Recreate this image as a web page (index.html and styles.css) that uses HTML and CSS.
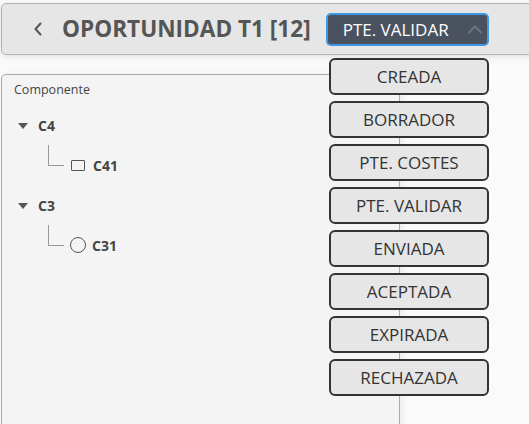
FILE: index.html
```html
<!DOCTYPE html>
<html lang="es">
<head>
<meta charset="utf-8">
<title>Oportunidad T1</title>
<link rel="stylesheet" href="styles.css">
</head>
<body>
  <header class="topbar">
    <button class="back" aria-label="Volver">
      <svg width="10" height="14" viewBox="0 0 10 14"><path d="M7.5 1.5 L2.5 7 L7.5 12.5" fill="none" stroke="#555" stroke-width="2" stroke-linecap="round" stroke-linejoin="round"/></svg>
    </button>
    <h1 class="title">OPORTUNIDAD T1 [12]</h1>
    <div class="status">
      <span class="status-text">PTE. VALIDAR</span>
      <svg class="caret" width="16" height="10" viewBox="0 0 16 10"><path d="M2 8.5 L8 2.5 L14 8.5" fill="none" stroke="#6e7582" stroke-width="2" stroke-linecap="round" stroke-linejoin="round"/></svg>
    </div>
  </header>

  <main class="content">
    <section class="panel">
      <div class="panel-label">Componente</div>
      <ul class="tree">
        <li class="node">
          <div class="node-row"><span class="toggle"></span><span class="node-label">C4</span></div>
          <ul class="children">
            <li class="leaf"><span class="connector"></span><span class="icon-square"></span><span class="leaf-label">C41</span></li>
          </ul>
        </li>
        <li class="node">
          <div class="node-row"><span class="toggle"></span><span class="node-label">C3</span></div>
          <ul class="children">
            <li class="leaf"><span class="connector"></span><span class="icon-circle"></span><span class="leaf-label">C31</span></li>
          </ul>
        </li>
      </ul>
    </section>
  </main>

  <ul class="status-menu">
    <li class="status-option">CREADA</li>
    <li class="status-option">BORRADOR</li>
    <li class="status-option">PTE. COSTES</li>
    <li class="status-option">PTE. VALIDAR</li>
    <li class="status-option">ENVIADA</li>
    <li class="status-option">ACEPTADA</li>
    <li class="status-option">EXPIRADA</li>
    <li class="status-option">RECHAZADA</li>
  </ul>
</body>
</html>
```

FILE: styles.css
```css
* { box-sizing: border-box; }

html, body {
  margin: 0;
  padding: 0;
  height: 100%;
}

body {
  background: #fafafa;
  font-family: "Open Sans", "Noto Sans", sans-serif;
  overflow: hidden;
  position: relative;
}

.topbar {
  margin: 3px -12px 0 1px;
  height: 52px;
  background: #e6e6e6;
  border: 1px solid #b3b3b3;
  border-radius: 5px;
  display: flex;
  align-items: center;
  padding-left: 31px;
  box-shadow: 0 2px 6px rgba(0, 0, 0, 0.10);
  position: relative;
  z-index: 2;
}

.back {
  border: 0;
  background: none;
  padding: 0;
  margin: 0 19px 0 0;
  width: 10px;
  height: 14px;
  display: flex;
}

.title {
  margin: 0 15px 0 0;
  font-size: 22.6px;
  font-weight: 700;
  color: #555;
  line-height: 1;
  letter-spacing: 0;
}

.status {
  width: 163px;
  height: 33px;
  background: #4a5260;
  border: 2px solid #3f98e6;
  border-radius: 5px;
  display: flex;
  align-items: center;
  justify-content: space-between;
  padding: 0 4px 0 15px;
}

.status-text {
  color: #fff;
  font-size: 17px;
  line-height: 1;
}

.content {
  margin-top: 19px;
  padding-left: 1px;
}

.panel {
  width: 399px;
  height: 360px;
  background: #f4f4f4;
  border: 1px solid #ababab;
  border-bottom: 0;
  border-radius: 5px 0 0 0;
  box-shadow: 3px 0 6px rgba(0, 0, 0, 0.06);
  padding: 6px 0 0 12px;
}

.panel-label {
  font-size: 12.5px;
  color: #444;
  line-height: 18px;
}

.tree, .children {
  list-style: none;
  margin: 0;
  padding: 0;
}

.tree {
  margin-top: 6px;
}

.node-row {
  height: 40px;
  display: flex;
  align-items: center;
  padding-left: 4px;
}

.toggle {
  width: 0;
  height: 0;
  border-left: 5px solid transparent;
  border-right: 5px solid transparent;
  border-top: 6px solid #555;
  margin-right: 10px;
  margin-top: 1px;
}

.node-label, .leaf-label {
  font-size: 14px;
  font-weight: 700;
  color: #444;
}

.leaf {
  height: 40px;
  display: flex;
  align-items: center;
  padding-left: 34px;
  position: relative;
}

.connector {
  width: 16px;
  height: 21px;
  border-left: 1px solid #999;
  border-bottom: 1px solid #999;
  align-self: flex-start;
  margin-right: 7px;
}

.icon-square {
  width: 14px;
  height: 11px;
  border: 1.5px solid #555;
  border-radius: 1px;
  margin-right: 8px;
}

.icon-circle {
  width: 16px;
  height: 16px;
  border: 1.5px solid #555;
  border-radius: 50%;
  margin-left: -1px;
  margin-right: 6px;
}

.status-menu {
  position: absolute;
  left: 329px;
  top: 58px;
  width: 160px;
  margin: 0;
  padding: 0;
  list-style: none;
  display: flex;
  flex-direction: column;
  gap: 6px;
  z-index: 5;
}

.status-option {
  height: 37px;
  background: #e6e6e6;
  border: 2px solid #333;
  border-radius: 6px;
  display: flex;
  align-items: center;
  justify-content: center;
  font-size: 17px;
  color: #333;
}
```
